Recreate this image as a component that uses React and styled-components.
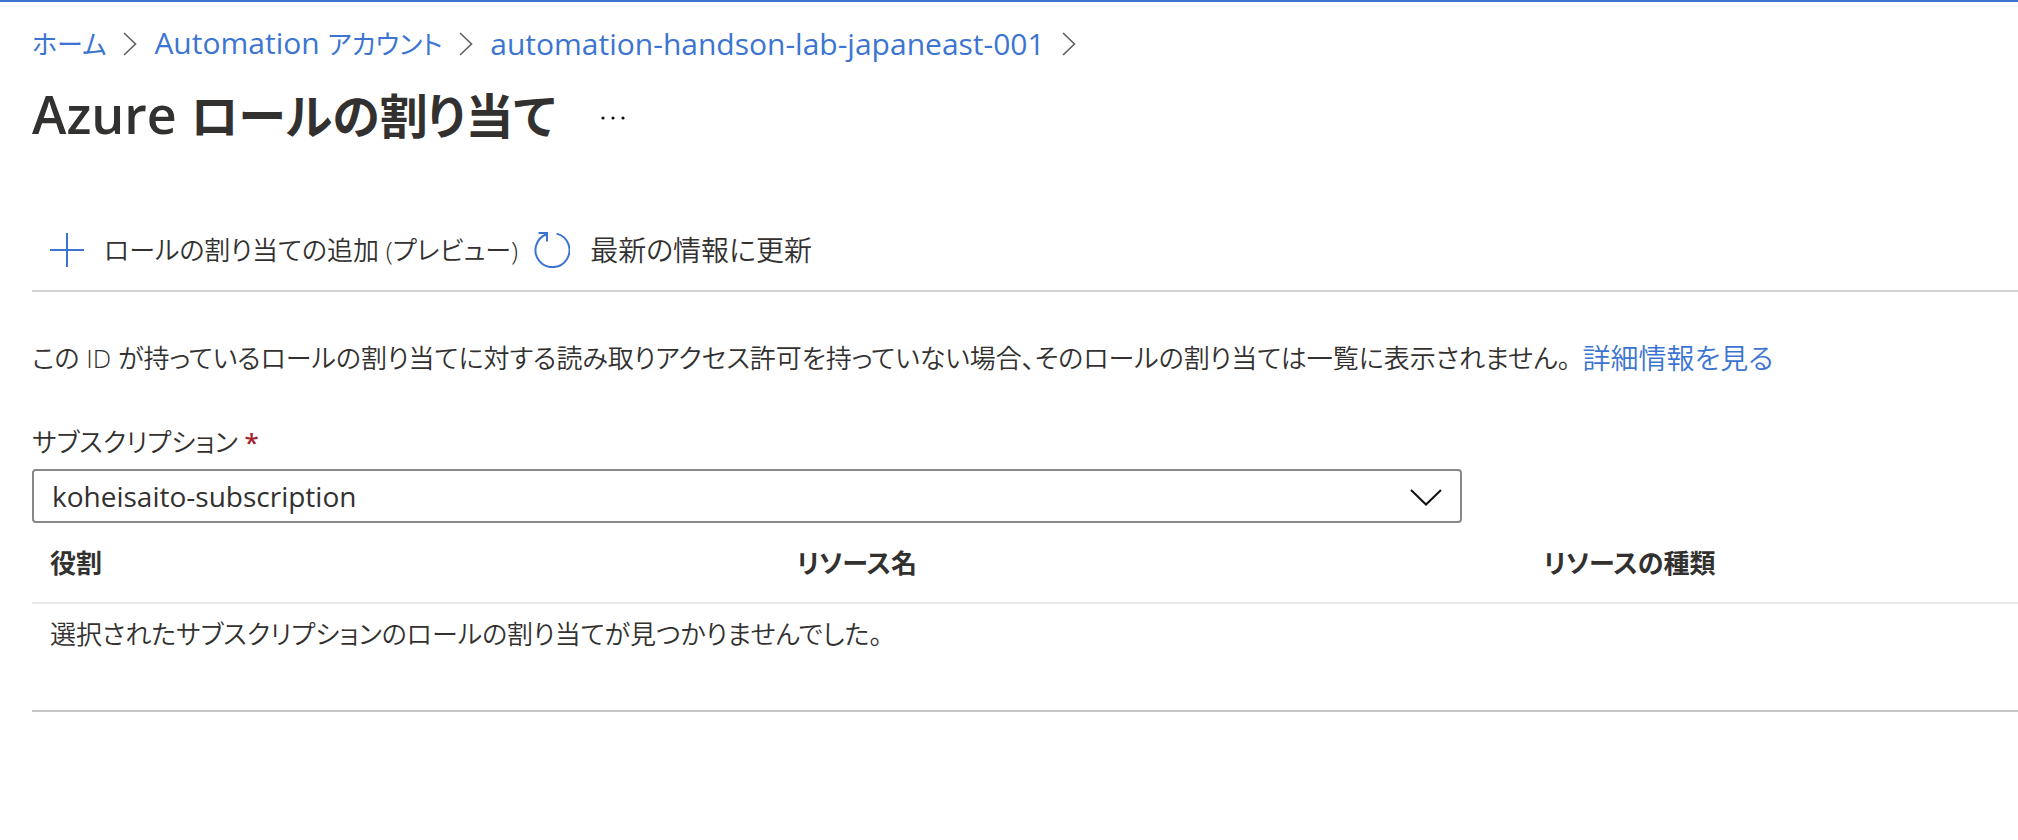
import React from "react";
import styled, { createGlobalStyle } from "styled-components";

const GlobalStyle = createGlobalStyle`
  *, *::before, *::after { box-sizing: border-box; }
  body {
    margin: 0;
    background: #fff;
    color: #323130;
    font-family: "Open Sans", "Noto Sans CJK JP", sans-serif;
    font-size: 26px;
    font-weight: 350;
    line-height: 40px;
    font-feature-settings: "palt";
  }
  button, select { font: inherit; font-feature-settings: inherit; color: inherit; }
`;

const Blade = styled.div`
  border-top: 2px solid #3c75d1;
  padding-left: 32px;
`;

const Breadcrumb = styled.nav`
  display: flex;
  align-items: center;
  gap: 17px;
  padding-top: 21px;
  font-size: 30px;
  font-weight: 400;
  white-space: nowrap;
`;

const Link = styled.a`
  color: #3c75d1;
  font-size: ${(p) => p.$size || "inherit"};
  text-decoration: none;
`;

const Kana = styled.span`
  font-size: ${(p) => p.$size};
`;

const TitleRow = styled.header`
  display: flex;
  align-items: center;
  gap: 46px;
  padding-top: 14px;
`;

const Title = styled.h1`
  margin: 0;
  font-size: 52px;
  line-height: 72px;
  font-weight: 600;
  white-space: nowrap;
`;

const PlainButton = styled.button`
  display: flex;
  align-items: center;
  gap: 20px;
  padding: 0;
  border: 0;
  background: none;
  font-size: ${(p) => p.$size || "inherit"};
  white-space: nowrap;
  cursor: pointer;
`;

const MoreButton = styled(PlainButton)`
  padding-top: 6px;
`;

const Toolbar = styled.div`
  display: flex;
  align-items: center;
  gap: 16px;
  margin-top: 60px;
  padding: 18px 18px 20px;
  border-bottom: 2px solid #d2d2d2;
`;

const Message = styled.p`
  display: flex;
  gap: 12px;
  margin: 46px 0 0;
  white-space: nowrap;
`;

const Field = styled.div`
  display: flex;
  flex-direction: column;
  margin-top: 44px;
`;

const Required = styled.span`
  color: #a4262c;
  font-weight: 600;
`;

const SelectBox = styled.div`
  position: relative;
  width: 72%;
  margin-top: 7px;
`;

const Select = styled.select`
  display: block;
  width: 100%;
  height: 54px;
  padding: 0 64px 0 18px;
  border: 2px solid #8a8886;
  border-radius: 4px;
  background: #fff;
  font-size: 28px;
  font-weight: 400;
  appearance: none;
`;

const SelectArrow = styled.svg`
  position: absolute;
  right: 20px;
  top: 20px;
  pointer-events: none;
`;

const Table = styled.table`
  width: 100%;
  table-layout: fixed;
  border-collapse: collapse;
  border-bottom: 2px solid #c8c8c8;
`;

const HeadCell = styled.th`
  width: ${(p) => p.$width || "auto"};
  height: 80px;
  padding: 0 18px;
  border-bottom: 2px solid #eaeaea;
  font-weight: 600;
  text-align: left;
  white-space: nowrap;
`;

const EmptyCell = styled.td`
  height: 108px;
  padding: 10px 18px;
  vertical-align: top;
`;

const Separator = () => (
  <svg width="14" height="24" viewBox="0 0 14 24" fill="none" stroke="#605e5c" strokeWidth="1.6" aria-hidden="true">
    <path d="M1 1 L12.5 12 L1 23" />
  </svg>
);

const AddIcon = () => (
  <svg width="34" height="34" viewBox="0 0 34 34" stroke="#3c75d1" strokeWidth="2" aria-hidden="true">
    <path d="M17 0V34M0 17H34" />
  </svg>
);

const RefreshIcon = () => (
  <svg width="36" height="36" viewBox="0 0 36 36" fill="none" stroke="#3c75d1" strokeWidth="2" aria-hidden="true">
    <path d="M22.5 1.6 A17 17 0 1 1 12.5 2.2" />
    <path d="M4.5 1 H13 V9.5" />
  </svg>
);

const MoreIcon = () => (
  <svg width="24" height="4" viewBox="0 0 24 4" fill="#111" aria-hidden="true">
    <circle cx="2" cy="2" r="1.6" />
    <circle cx="12" cy="2" r="1.6" />
    <circle cx="22" cy="2" r="1.6" />
  </svg>
);

export default function App() {
  return (
    <Blade lang="ja">
      <GlobalStyle />
      <Breadcrumb aria-label="breadcrumb">
        <Link href="#home" $size="26px">ホーム</Link>
        <Separator />
        <Link href="#accounts">
          Automation <Kana $size="26px">アカウント</Kana>
        </Link>
        <Separator />
        <Link href="#account">automation-handson-lab-japaneast-001</Link>
        <Separator />
      </Breadcrumb>
      <TitleRow>
        <Title>
          Azure <Kana $size="48px">ロールの割り当て</Kana>
        </Title>
        <MoreButton type="button" aria-label="その他">
          <MoreIcon />
        </MoreButton>
      </TitleRow>
      <Toolbar role="toolbar">
        <PlainButton type="button">
          <AddIcon />
          ロールの割り当ての追加 (プレビュー)
        </PlainButton>
        <PlainButton type="button" $size="28px">
          <RefreshIcon />
          最新の情報に更新
        </PlainButton>
      </Toolbar>
      <Message>
        <span>
          この ID が持っているロールの割り当てに対する読み取りアクセス許可を持っていない場合、そのロールの割り当ては一覧に表示されません。
        </span>
        <Link href="#details" $size="28px">詳細情報を見る</Link>
      </Message>
      <Field>
        <label htmlFor="subscription">
          サブスクリプション <Required>*</Required>
        </label>
        <SelectBox>
          <Select id="subscription" defaultValue="koheisaito-subscription" required>
            <option>koheisaito-subscription</option>
          </Select>
          <SelectArrow width="32" height="17" viewBox="0 0 32 17" fill="none" stroke="#111" strokeWidth="2">
            <path d="M1 1 L16 15.5 L31 1" />
          </SelectArrow>
        </SelectBox>
      </Field>
      <Table>
        <thead>
          <tr>
            <HeadCell $width="37.6%">役割</HeadCell>
            <HeadCell $width="37.6%">リソース名</HeadCell>
            <HeadCell>リソースの種類</HeadCell>
          </tr>
        </thead>
        <tbody>
          <tr>
            <EmptyCell colSpan={3}>
              選択されたサブスクリプションのロールの割り当てが見つかりませんでした。
            </EmptyCell>
          </tr>
        </tbody>
      </Table>
    </Blade>
  );
}
